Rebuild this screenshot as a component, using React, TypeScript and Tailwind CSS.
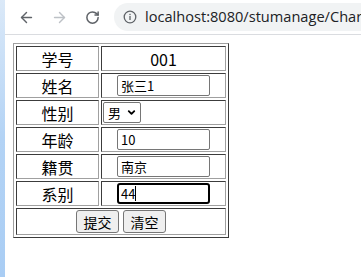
import { ArrowLeft, ArrowRight, RotateCw, ChevronDown } from 'lucide-react';

const font = { fontFamily: '"Noto Sans CJK SC", "Noto Sans", sans-serif' };

function Label({ text }: { text: string }) {
  return (
    <td className="p-0 border border-t-[#3c3c3c] border-l-[#3c3c3c] border-b-[#a0a0a0] border-r-[#a0a0a0]">
      <div className="w-[81px] h-[23px] flex items-center justify-center text-[16px] text-black leading-none">{text}</div>
    </td>
  );
}

function Field({ value, focused }: { value: string; focused?: boolean }) {
  return (
    <td className="p-0 border border-t-[#3c3c3c] border-l-[#3c3c3c] border-b-[#a0a0a0] border-r-[#a0a0a0]">
      <div className="w-[123px] h-[23px] flex items-center justify-center">
        <div
          className={`w-[93px] h-[21px] flex items-center text-[13px] text-black leading-none bg-white ${
            focused ? 'border-2 border-black rounded-[3px] pl-[2px]' : 'border border-[#767676] rounded-[2px] pl-[3px]'
          }`}
        >
          {value}
          {focused && <span className="inline-block w-px h-[15px] bg-black" />}
        </div>
      </div>
    </td>
  );
}

export default function App() {
  return (
    <div className="w-[361px] h-[277px] flex bg-white overflow-hidden" style={font}>
      <div className="w-[5px] shrink-0 h-full bg-linear-to-b from-[#dbe9f8] via-[#b3d3f5] to-[#a9cdf4]" />
      <div className="flex-1 min-w-0 flex flex-col">
        <div className="h-[35px] flex items-center border-b border-[#dadce0] bg-white">
          <div className="flex items-center pl-[13px] gap-[16px] shrink-0">
            <ArrowLeft size={17} strokeWidth={2} className="text-[#5f6368]" />
            <ArrowRight size={17} strokeWidth={2} className="text-[#bdc1c6]" />
            <RotateCw size={15} strokeWidth={2.4} className="text-[#5f6368] ml-[1px]" />
          </div>
          <div className="ml-[14px] flex-1 min-w-0 h-[28px] rounded-l-full bg-[#f1f3f4] flex items-center pl-[9px] gap-[8px] whitespace-nowrap overflow-hidden">
            <svg width="14" height="14" viewBox="0 0 14 14" className="shrink-0">
              <circle cx="7" cy="7" r="5.8" fill="none" stroke="#5f6368" strokeWidth="1.3" />
              <rect x="6.35" y="6" width="1.3" height="4" fill="#5f6368" />
              <rect x="6.35" y="3.8" width="1.3" height="1.3" fill="#5f6368" />
            </svg>
            <span className="text-[14.6px] text-[#202124]" style={{ fontFamily: '"Open Sans", "Noto Sans", sans-serif' }}>
              localhost:8080/stumanage/Char
            </span>
          </div>
        </div>

        <div className="pl-[8px] pt-[8px]">
          <table className="border-separate border-spacing-[2px] border border-t-[#a0a0a0] border-l-[#a0a0a0] border-b-[#3c3c3c] border-r-[#3c3c3c]">
            <tbody>
              <tr>
                <Label text="学号" />
                <td className="p-0 border border-t-[#3c3c3c] border-l-[#3c3c3c] border-b-[#a0a0a0] border-r-[#a0a0a0]">
                  <div className="w-[123px] h-[23px] flex items-center justify-center text-[16px] text-black leading-none">001</div>
                </td>
              </tr>
              <tr>
                <Label text="姓名" />
                <Field value="张三1" />
              </tr>
              <tr>
                <Label text="性别" />
                <td className="p-0 border border-t-[#3c3c3c] border-l-[#3c3c3c] border-b-[#a0a0a0] border-r-[#a0a0a0]">
                  <div className="w-[123px] h-[23px] flex items-center pl-[1px]">
                    <div className="w-[38px] h-[21px] border border-[#767676] rounded-[2px] bg-white flex items-center pl-[4px] gap-[5px] text-[13px] text-black leading-none">
                      男
                      <ChevronDown size={11} strokeWidth={4} className="text-black" />
                    </div>
                  </div>
                </td>
              </tr>
              <tr>
                <Label text="年龄" />
                <Field value="10" />
              </tr>
              <tr>
                <Label text="籍贯" />
                <Field value="南京" />
              </tr>
              <tr>
                <Label text="系别" />
                <Field value="44" focused />
              </tr>
              <tr>
                <td colSpan={2} className="p-0 border border-t-[#3c3c3c] border-l-[#3c3c3c] border-b-[#a0a0a0] border-r-[#a0a0a0]">
                  <div className="h-[25px] flex items-center justify-center gap-[4px]">
                    <button className="w-[43px] h-[23px] bg-[#efefef] border border-[#767676] rounded-[3px] text-[14px] text-black leading-none">提交</button>
                    <button className="w-[43px] h-[23px] bg-[#efefef] border border-[#767676] rounded-[3px] text-[14px] text-black leading-none">清空</button>
                  </div>
                </td>
              </tr>
            </tbody>
          </table>
        </div>
      </div>
    </div>
  );
}
